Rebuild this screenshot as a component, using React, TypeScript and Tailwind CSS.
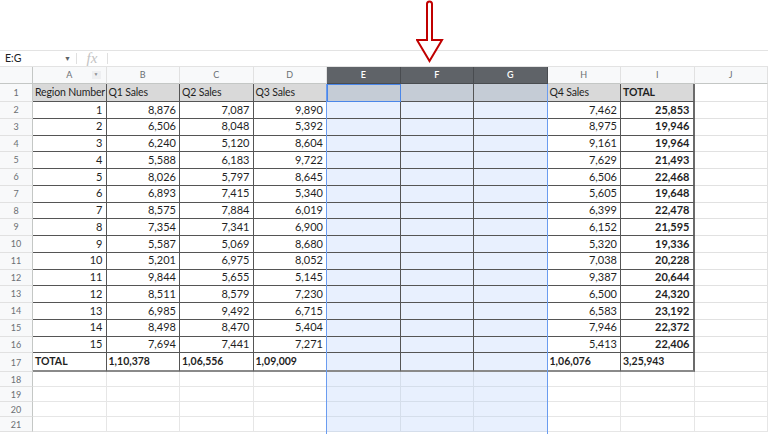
import React from 'react';

const COLS = ['A', 'B', 'C', 'D', 'E', 'F', 'G', 'H', 'I', 'J'];
const SEL = ['E', 'F', 'G'];

// region, q1, q2, q3, q4, total
const ROWS: number[][] = [
  [1, 8876, 7087, 9890, 7462, 25853],
  [2, 6506, 8048, 5392, 8975, 19946],
  [3, 6240, 5120, 8604, 9161, 19964],
  [4, 5588, 6183, 9722, 7629, 21493],
  [5, 8026, 5797, 8645, 6506, 22468],
  [6, 6893, 7415, 5340, 5605, 19648],
  [7, 8575, 7884, 6019, 6399, 22478],
  [8, 7354, 7341, 6900, 6152, 21595],
  [9, 5587, 5069, 8680, 5320, 19336],
  [10, 5201, 6975, 8052, 7038, 20228],
  [11, 9844, 5655, 5145, 9387, 20644],
  [12, 8511, 8579, 7230, 6500, 24320],
  [13, 6985, 9492, 6715, 6583, 23192],
  [14, 8498, 8470, 5404, 7946, 22372],
  [15, 7694, 7441, 7271, 5413, 22406],
];

const fmt = (n: number) => n.toLocaleString('en-US');

const RowNum = ({ n, h }: { n: number; h: string }) => (
  <div
    className={`${h} w-[33px] shrink-0 flex items-center justify-center bg-[#f8f9fa] border-r border-b border-r-[#c4c7c5] border-b-[#e1e1e1] text-[9px] text-[#6b6f73]`}
  >
    {n}
  </div>
);

const Arrow = () => (
  <svg className="absolute left-[416px] top-0" width="28" height="64" viewBox="0 0 28 64">
    <path
      d="M11 40 L11 4 A2.5 2.5 0 0 1 16 4 L16 40 L26 40 L13.5 61 L1 40 Z"
      fill="white"
      stroke="#c00000"
      strokeWidth="2"
    />
  </svg>
);

const FormulaBar = () => (
  <div className="h-[17px] flex items-center border-t border-b border-[#e3e3e3] text-[10.5px] text-[#202124]">
    <div className="w-[76px] flex items-center justify-between pl-[5px] pr-[5px]">
      <span>E:G</span>
      <span className="text-[7px] text-[#5f6368]">▼</span>
    </div>
    <div className="w-px h-[11px] bg-[#e0e0e0]" />
    <span className="w-[30px] text-center text-[15px] italic text-[#c3c3c3] font-['Liberation_Serif',serif] leading-none">
      fx
    </span>
    <div className="w-px h-[11px] bg-[#e0e0e0]" />
  </div>
);

const HeaderRow = () => (
  <div className="flex h-[17px]">
    <div className="w-[33px] shrink-0 bg-[#f8f9fa] border-r border-b border-r-[#c4c7c5] border-b-[#c4c7c5]" />
    {COLS.map((c) =>
      SEL.includes(c) ? (
        <div
          key={c}
          className="w-[73.5px] shrink-0 flex items-center justify-center bg-[#5f6368] border-r border-b border-[#494c50] text-[9px] text-white font-semibold"
        >
          {c}
        </div>
      ) : (
        <div
          key={c}
          className="relative w-[73.5px] shrink-0 flex items-center justify-center bg-[#f8f9fa] border-r border-b border-r-[#e1e1e1] border-b-[#c4c7c5] text-[9px] text-[#6b6f73]"
        >
          {c}
          {c === 'A' && (
            <span className="absolute right-[5px] top-[4px] w-[9px] h-[8px] flex items-center justify-center bg-[#eeeff1] text-[5px] text-[#8a8d91]">
              ▼
            </span>
          )}
        </div>
      )
    )}
  </div>
);

type CellProps = {
  children?: React.ReactNode;
  right?: boolean;
  bold?: boolean;
  className: string;
};

const Cell = ({ children, right, bold, className }: CellProps) => (
  <div
    className={`w-[73.5px] shrink-0 flex items-center px-[2px] whitespace-nowrap overflow-hidden ${
      right ? 'justify-end pr-[3px]' : 'justify-start'
    } ${bold ? 'font-bold' : ''} ${className}`}
  >
    {children}
  </div>
);

const App: React.FC = () => {
  const heads = ['Region Number', 'Q1 Sales', 'Q2 Sales', 'Q3 Sales', '', '', '', 'Q4 Sales', 'TOTAL', ''];
  const totals = ['TOTAL', '1,10,378', '1,06,556', '1,09,009', '', '', '', '1,06,076', '3,25,943', ''];

  return (
    <div className="relative w-[768px] h-[434px] overflow-hidden bg-white font-['Lato',sans-serif] text-[#1f1f1f]">
      <div className="h-[50px]" />
      <FormulaBar />
      <HeaderRow />

      {/* row 1: headings */}
      <div className="flex h-[18px] text-[10.5px] tracking-[-0.15px]">
        <RowNum n={1} h="h-[18px]" />
        {heads.map((t, i) => {
          const c = COLS[i];
          if (c === 'J')
            return <Cell key={c} className="border-r border-b border-[#e1e1e1]" />;
          if (SEL.includes(c))
            return (
              <Cell
                key={c}
                className={`bg-[#c5ccd6] border-r border-b border-[#555] ${
                  c === 'E' ? 'outline outline-1 outline-[#4a86e8] -outline-offset-1' : ''
                }`}
              />
            );
          return (
            <Cell
              key={c}
              bold={c === 'I'}
              className={`bg-[#d9d9d9] border-b border-[#555] ${
                c === 'I' ? 'border-r-2 border-r-[#6b6b6b]' : 'border-r'
              }`}
            >
              {t}
            </Cell>
          );
        })}
      </div>

      {/* rows 2-16: data */}
      {ROWS.map((r, idx) => {
        const vals = [String(r[0]), fmt(r[1]), fmt(r[2]), fmt(r[3]), '', '', '', fmt(r[4]), fmt(r[5]), ''];
        return (
          <div key={idx} className="flex h-[16.75px] text-[11px]">
            <RowNum n={idx + 2} h="h-[16.75px]" />
            {vals.map((v, i) => {
              const c = COLS[i];
              if (c === 'J')
                return <Cell key={c} className="border-r border-b border-[#e1e1e1]" />;
              if (SEL.includes(c))
                return <Cell key={c} className="bg-[#e8f0fe] border-r border-b border-[#555]" />;
              return (
                <Cell
                  key={c}
                  right
                  bold={c === 'I'}
                  className={`border-b border-[#555] ${
                    c === 'I' ? 'border-r-2 border-r-[#6b6b6b]' : 'border-r'
                  }`}
                >
                  {v}
                </Cell>
              );
            })}
          </div>
        );
      })}

      {/* row 17: totals */}
      <div className="flex h-[19px] text-[10.5px]">
        <RowNum n={17} h="h-[19px]" />
        {totals.map((t, i) => {
          const c = COLS[i];
          if (c === 'J')
            return <Cell key={c} className="border-r border-b border-[#e1e1e1]" />;
          if (SEL.includes(c))
            return (
              <Cell
                key={c}
                className="bg-[#e8f0fe] border-r border-r-[#555] border-b-2 border-b-[#8a8a8a]"
              />
            );
          return (
            <Cell
              key={c}
              bold
              className={`border-b-2 border-b-[#8a8a8a] ${
                c === 'I' ? 'border-r-2 border-r-[#6b6b6b]' : 'border-r border-r-[#555]'
              }`}
            >
              {t}
            </Cell>
          );
        })}
      </div>

      {/* rows 18-21: empty */}
      {[18, 19, 20, 21].map((n) => (
        <div key={n} className="flex h-[15px]">
          <RowNum n={n} h="h-[15px]" />
          {COLS.map((c) =>
            SEL.includes(c) ? (
              <div
                key={c}
                className="w-[73.5px] shrink-0 bg-[#e8f0fe] border-r border-b border-[#d5deeb]"
              />
            ) : (
              <div key={c} className="w-[73.5px] shrink-0 border-r border-b border-[#e6e6e6]" />
            )
          )}
        </div>
      ))}

      {/* selection edges over columns E:G */}
      <div className="absolute left-[325.5px] top-[84px] w-[222px] h-[360px] border-x border-[#6a9cf0] pointer-events-none" />

      <Arrow />
    </div>
  );
};

export default App;
